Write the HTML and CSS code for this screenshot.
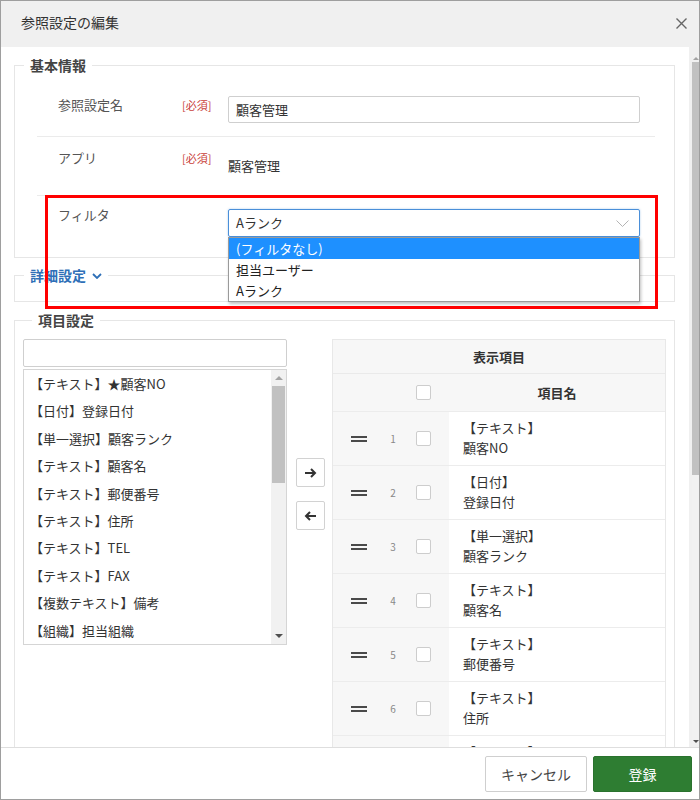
FILE: index.html
```html
<!DOCTYPE html>
<html lang="ja">
<head>
    <meta charset="utf-8">
    <title>参照設定の編集</title>
    <link rel="stylesheet" href="styles.css">
</head>
<body>
<div class="dialog">
    <div class="dialog-header">
        <span class="dialog-title">参照設定の編集</span>
        <span class="close">
            <svg width="11" height="11" viewBox="0 0 11 11"><path d="M0.5 0.5L10.5 10.5M10.5 0.5L0.5 10.5" stroke="#666" stroke-width="1.4" fill="none"/></svg>
        </span>
    </div>

    <div class="dialog-main">
        <div class="dialog-body">
            <!-- basic info -->
            <fieldset class="group">
                <legend>基本情報</legend>
                <div class="row row-name">
                    <div class="label">参照設定名</div>
                    <div class="req">[必須]</div>
                    <input class="text" type="text" value="顧客管理">
                </div>
                <div class="row row-app">
                    <div class="label">アプリ</div>
                    <div class="req">[必須]</div>
                    <div class="value">顧客管理</div>
                </div>
                <div class="row row-filter">
                    <div class="label">フィルタ</div>
                    <div class="req"></div>
                    <div class="select">
                        <span>Aランク</span>
                        <svg class="caret" width="13" height="7" viewBox="0 0 13 7"><path d="M0.5 0.5L6.5 6.5L12.5 0.5" stroke="#b4b4b4" stroke-width="1" fill="none"/></svg>
                        <ul class="options">
                            <li class="active">(フィルタなし)</li>
                            <li>担当ユーザー</li>
                            <li>Aランク</li>
                        </ul>
                    </div>
                    <div class="mark"></div>
                </div>
            </fieldset>

            <!-- advanced, collapsed -->
            <fieldset class="group group-collapsed">
                <legend class="toggle">詳細設定
                    <svg width="10" height="6" viewBox="0 0 10 6"><path d="M1 1L5 5L9 1" stroke="#2e6fb7" stroke-width="1.8" fill="none"/></svg>
                </legend>
            </fieldset>

            <!-- columns -->
            <fieldset class="group group-items">
                <legend>項目設定</legend>
                <div class="columns">
                    <div class="source">
                        <input class="text search" type="text">
                        <div class="listbox">
                            <ul class="items">
                                <li>【テキスト】★顧客NO</li>
                                <li>【日付】登録日付</li>
                                <li>【単一選択】顧客ランク</li>
                                <li>【テキスト】顧客名</li>
                                <li>【テキスト】郵便番号</li>
                                <li>【テキスト】住所</li>
                                <li>【テキスト】TEL</li>
                                <li>【テキスト】FAX</li>
                                <li>【複数テキスト】備考</li>
                                <li>【組織】担当組織</li>
                            </ul>
                            <div class="scroll">
                                <div class="scroll-up"><i></i></div>
                                <div class="scroll-thumb"></div>
                                <div class="scroll-track"></div>
                                <div class="scroll-down"><i></i></div>
                            </div>
                        </div>
                    </div>

                    <div class="movers">
                        <button class="move">
                            <svg width="13" height="12" viewBox="0 0 13 12"><path d="M1 6H11M7 2L11 6L7 10" stroke="#333" stroke-width="2" fill="none"/></svg>
                        </button>
                        <button class="move">
                            <svg width="13" height="12" viewBox="0 0 13 12"><path d="M12 6H2M6 2L2 6L6 10" stroke="#333" stroke-width="2" fill="none"/></svg>
                        </button>
                    </div>

                    <div class="shown">
                        <div class="shown-title">表示項目</div>
                        <div class="shown-row shown-head">
                            <div class="grip"></div>
                            <div class="num"></div>
                            <div class="chk"><span class="box"></span></div>
                            <div class="name">項目名</div>
                        </div>
                        <div class="shown-row">
                            <div class="grip"><span class="bars"></span></div>
                            <div class="num">1</div>
                            <div class="chk"><span class="box"></span></div>
                            <div class="name">【テキスト】<br>顧客NO</div>
                        </div>
                        <div class="shown-row">
                            <div class="grip"><span class="bars"></span></div>
                            <div class="num">2</div>
                            <div class="chk"><span class="box"></span></div>
                            <div class="name">【日付】<br>登録日付</div>
                        </div>
                        <div class="shown-row">
                            <div class="grip"><span class="bars"></span></div>
                            <div class="num">3</div>
                            <div class="chk"><span class="box"></span></div>
                            <div class="name">【単一選択】<br>顧客ランク</div>
                        </div>
                        <div class="shown-row">
                            <div class="grip"><span class="bars"></span></div>
                            <div class="num">4</div>
                            <div class="chk"><span class="box"></span></div>
                            <div class="name">【テキスト】<br>顧客名</div>
                        </div>
                        <div class="shown-row">
                            <div class="grip"><span class="bars"></span></div>
                            <div class="num">5</div>
                            <div class="chk"><span class="box"></span></div>
                            <div class="name">【テキスト】<br>郵便番号</div>
                        </div>
                        <div class="shown-row">
                            <div class="grip"><span class="bars"></span></div>
                            <div class="num">6</div>
                            <div class="chk"><span class="box"></span></div>
                            <div class="name">【テキスト】<br>住所</div>
                        </div>
                        <div class="shown-row">
                            <div class="grip"><span class="bars"></span></div>
                            <div class="num">7</div>
                            <div class="chk"><span class="box"></span></div>
                            <div class="name">【テキスト】<br>TEL</div>
                        </div>
                    </div>
                </div>
            </fieldset>
        </div>

        <div class="vscroll">
            <div class="scroll-up"><i></i></div>
            <div class="vscroll-thumb"></div>
            <div class="scroll-track"></div>
            <div class="scroll-down"><i></i></div>
        </div>
    </div>

    <div class="dialog-footer">
        <button class="btn">キャンセル</button>
        <button class="btn btn-primary">登録</button>
    </div>
</div>
</body>
</html>
```

FILE: styles.css
```css
body {
    margin: 0;
    font-family: "Noto Sans CJK JP", "Noto Sans", sans-serif;
    font-size: 13px;
    color: #333;
}

ul {
    margin: 0;
    padding: 0;
    list-style: none;
}

.dialog {
    width: 700px;
    height: 800px;
    box-sizing: border-box;
    border: 1px solid #9e9e9e;
    background-color: #f0f0f0;
    display: flex;
    flex-direction: column;
}

/* header */
.dialog-header {
    height: 46px;
    display: flex;
    justify-content: space-between;
    padding: 12px 12px 0 20px;
    box-sizing: border-box;
}
.dialog-title {
    font-size: 14px;
    line-height: 18px;
    color: #333;
}
.close {
    margin-top: 5px;
    width: 11px;
    height: 11px;
    display: flex;
}

/* main area */
.dialog-main {
    height: 700px;
    display: flex;
}
.dialog-body {
    width: 688px;
    background-color: white;
    overflow: hidden;
}

.group {
    margin: 8px 14px 0 13px;
    padding: 0;
    border: 1px solid #e6e6e6;
    min-width: 0;
}
.group legend {
    margin-left: 9px;
    padding: 0 6px;
    font-size: 14px;
    line-height: 20px;
    font-weight: bold;
    color: #444;
}
.group-collapsed {
    margin-top: 7px;
    padding-bottom: 16px;
}
.group-collapsed legend.toggle {
    color: #2e6fb7;
}
.toggle svg {
    margin-left: 3px;
    vertical-align: 2px;
}

/* form rows */
.row {
    margin: 0 19px 0 22px;
    display: flex;
    align-items: flex-start;
}
.row-name {
    padding: 21px 0 13px;
    border-bottom: 1px solid #ebebeb;
}
.row-app {
    padding: 12px 0 20px;
    border-bottom: 1px solid #ebebeb;
}
.row-filter {
    padding: 10px 0 20px;
    position: relative;
}
.label {
    width: 145px;
    flex: none;
    padding-left: 21px;
    box-sizing: border-box;
    line-height: 18px;
    color: #555;
}
.req {
    width: 46px;
    flex: none;
    font-size: 11px;
    line-height: 18px;
    color: #c9413a;
}
.value {
    margin-top: 8px;
    line-height: 18px;
}

.text {
    height: 28px;
    box-sizing: border-box;
    border: 1px solid #cfcfcf;
    border-radius: 2px;
    padding: 0 7px;
    font-family: inherit;
    font-size: 13px;
    color: #333;
    outline: none;
}
.row .text {
    flex: 1;
    min-width: 0;
    height: 27px;
    margin-right: 15px;
}

/* filter select with its open list */
.select {
    flex: 1;
    margin: 3px 15px 0 0;
    height: 28px;
    box-sizing: border-box;
    border: 1px solid #4a8fd9;
    border-radius: 2px;
    box-shadow: 0 0 2px rgba(74, 143, 217, 0.5);
    padding-left: 7px;
    line-height: 26px;
    position: relative;
}
.caret {
    position: absolute;
    right: 10px;
    top: 10px;
}
.options {
    position: absolute;
    top: 27px;
    left: -1px;
    right: -1px;
    background: white;
    border: 1px solid #9a9a9a;
    box-shadow: 1px 2px 3px rgba(0, 0, 0, 0.25);
    z-index: 2;
}
.options li {
    height: 21px;
    line-height: 21px;
    padding-left: 7px;
    color: #222;
}
.options li.active {
    background-color: #1e90ff;
    color: white;
}
.mark {
    position: absolute;
    left: 8px;
    right: -3px;
    top: -1px;
    height: 114px;
    border: 3px solid #ff0000;
    box-sizing: border-box;
    z-index: 3;
    pointer-events: none;
}

/* item settings */
.group-items {
    padding: 9px 8px 0;
}
.columns {
    display: flex;
    align-items: flex-start;
}
.source {
    width: 264px;
}
.search {
    width: 264px;
    display: block;
}
.listbox {
    margin-top: 2px;
    height: 276px;
    box-sizing: border-box;
    border: 1px solid #d5d5d5;
    display: flex;
}
.items {
    flex: 1;
    padding-left: 6px;
}
.items li {
    height: 27.4px;
    line-height: 27.4px;
    white-space: nowrap;
}

.scroll {
    width: 15px;
    background-color: #f1f1f1;
    display: flex;
    flex-direction: column;
}
.scroll-up, .scroll-down {
    height: 16px;
    display: flex;
    align-items: center;
    justify-content: center;
}
.scroll-up i {
    border: 4px solid transparent;
    border-top: 0;
    border-bottom: 4px solid #a3a3a3;
}
.scroll-down i {
    border: 4px solid transparent;
    border-bottom: 0;
    border-top: 4px solid #505050;
}
.scroll-thumb {
    height: 97px;
    margin: 0 1px;
    background-color: #c1c1c1;
}
.scroll-track {
    flex: 1;
}

.movers {
    margin-left: 9px;
    padding-top: 119px;
    display: flex;
    flex-direction: column;
}
.move {
    width: 29px;
    height: 29px;
    padding: 0;
    border: 1px solid #d2d2d2;
    border-radius: 2px;
    background: white;
    display: flex;
    align-items: center;
    justify-content: center;
}
.move + .move {
    margin-top: 14px;
}

.shown {
    flex: 1;
    margin-left: 7px;
    border: 1px solid #e8e8e8;
}
.shown-title {
    height: 33px;
    line-height: 33px;
    text-align: center;
    font-weight: bold;
    background-color: #f7f7f7;
    border-bottom: 1px solid #eaeaea;
}
.shown-row {
    height: 54px;
    box-sizing: border-box;
    border-bottom: 1px solid #ececec;
    display: flex;
}
.shown-head {
    height: 38px;
}
.grip, .num, .chk {
    background-color: #f7f7f7;
    display: flex;
    align-items: center;
}
.grip {
    width: 52px;
    justify-content: center;
}
.bars {
    width: 16px;
    height: 2px;
    border-top: 2px solid #4a4a4a;
    border-bottom: 2px solid #4a4a4a;
}
.num {
    width: 16px;
    justify-content: center;
    font-size: 10px;
    color: #888;
}
.chk {
    width: 48px;
    padding-left: 15px;
    box-sizing: border-box;
}
.box {
    width: 15px;
    height: 15px;
    box-sizing: border-box;
    border: 1px solid #cdcdcd;
    border-radius: 2px;
    background: white;
}
.name {
    flex: 1;
    padding: 6px 14px;
    line-height: 20px;
    white-space: nowrap;
}
.shown-head .name {
    background-color: #f7f7f7;
    font-weight: bold;
    text-align: center;
    padding: 0;
    line-height: 37px;
}

/* dialog scrollbar */
.vscroll {
    width: 7px;
    margin: 8px 0 2px 3px;
    background-color: #f1f1f1;
    display: flex;
    flex-direction: column;
}
.vscroll .scroll-up, .vscroll .scroll-down {
    height: 7px;
}
.vscroll .scroll-up i, .vscroll .scroll-down i {
    border-width: 3px;
}
.vscroll-thumb {
    height: 413px;
    background-color: #c1c1c1;
}

/* footer */
.dialog-footer {
    height: 52px;
    box-sizing: border-box;
    border-top: 1px solid #dedede;
    background-color: white;
    padding: 8px 7px 0;
    display: flex;
    justify-content: flex-end;
    align-items: flex-start;
}
.btn {
    height: 36px;
    width: 102px;
    border: 1px solid #cfcfcf;
    border-radius: 2px;
    background: white;
    font-family: inherit;
    font-size: 14px;
    color: #444;
}
.btn-primary {
    width: 99px;
    margin-left: 6px;
    background-color: #2e7d32;
    border-color: #2a722e;
    color: white;
}
```
